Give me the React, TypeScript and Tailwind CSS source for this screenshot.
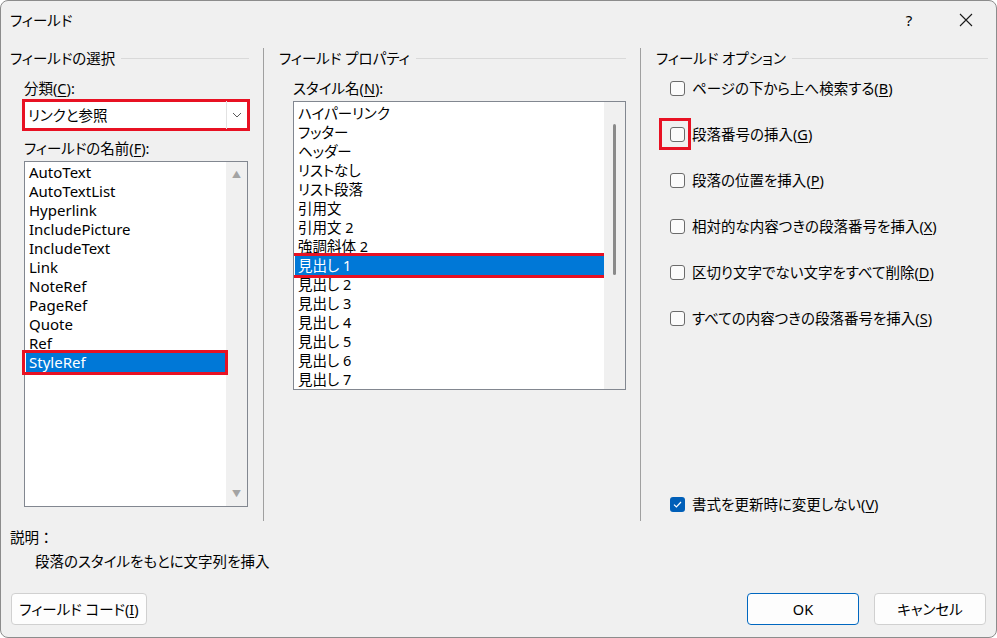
import type { ReactNode } from 'react'

const FIELD_NAMES = [
  'AutoText',
  'AutoTextList',
  'Hyperlink',
  'IncludePicture',
  'IncludeText',
  'Link',
  'NoteRef',
  'PageRef',
  'Quote',
  'Ref',
  'StyleRef',
]

const STYLE_NAMES = [
  'ハイパーリンク',
  'フッター',
  'ヘッダー',
  'リストなし',
  'リスト段落',
  '引用文',
  '引用文 2',
  '強調斜体 2',
  '見出し 1',
  '見出し 2',
  '見出し 3',
  '見出し 4',
  '見出し 5',
  '見出し 6',
  '見出し 7',
]

const OPTIONS: { label: string; key: string }[] = [
  { label: 'ページの下から上へ検索する', key: 'B' },
  { label: '段落番号の挿入', key: 'G' },
  { label: '段落の位置を挿入', key: 'P' },
  { label: '相対的な内容つきの段落番号を挿入', key: 'X' },
  { label: '区切り文字でない文字をすべて削除', key: 'D' },
  { label: 'すべての内容つきの段落番号を挿入', key: 'S' },
]

function Acc({ children }: { children: ReactNode }) {
  return <u className="underline underline-offset-2">{children}</u>
}

function GroupHeader({ title }: { title: string }) {
  return (
    <div className="flex h-[20px] items-center gap-[6px]">
      <span className="whitespace-nowrap">{title}</span>
      <div className="h-px flex-1 bg-[#d9d9d9]" />
    </div>
  )
}

function Checkbox({ checked = false }: { checked?: boolean }) {
  if (checked) {
    return (
      <span className="flex h-[15px] w-[15px] shrink-0 items-center justify-center rounded-[3px] bg-[#005fb8]">
        <svg width="9" height="7" viewBox="0 0 9 7" fill="none">
          <path d="M1 3.6 L3.4 6 L8 1" stroke="white" strokeWidth="1.2" />
        </svg>
      </span>
    )
  }
  return (
    <span className="h-[15px] w-[15px] shrink-0 rounded-[3px] border border-[#6b6b6b] bg-[#fbfbfb]" />
  )
}

function Button({ children, primary = false, className = '' }: { children: ReactNode; primary?: boolean; className?: string }) {
  return (
    <button
      className={`flex h-[32px] items-center justify-center rounded-[4px] border bg-[#fdfdfd] ${
        primary ? 'border-[#0067c0]' : 'border-[#d0d0d0]'
      } ${className}`}
    >
      {children}
    </button>
  )
}

function ListRow({ text, selected = false, ring = '' }: { text: string; selected?: boolean; ring?: string }) {
  if (!selected) {
    return <div className="h-[19px] overflow-hidden pl-[3px] leading-[19px]">{text}</div>
  }
  return (
    <div className="relative h-[19px] bg-[#0078d7] pl-[3px] leading-[19px] text-white">
      {text}
      <div className={`absolute -bottom-[3px] -top-[3px] border-[3px] border-[#e81123] ${ring}`} />
    </div>
  )
}

export default function App() {
  return (
    <div className="h-[638px] w-[997px] overflow-hidden bg-white font-['Noto_Sans','Noto_Sans_CJK_JP',sans-serif] text-[14.5px] leading-[20px] text-black [font-feature-settings:'palt']">
      <div className="relative flex h-[638px] w-[997px] flex-col rounded-[8px] border border-[#8c8c8c] bg-[#f0f0f0]">
        {/* title bar */}
        <div className="flex h-[37px] shrink-0 items-center pl-[9px]">
          <span className="flex-1">フィールド</span>
          <span className="w-[20px] text-center text-[15px]">?</span>
          <span className="ml-[36px] mr-[19px] flex w-[22px] items-center justify-center">
            <svg width="14" height="14" viewBox="0 0 14 14">
              <path d="M1 1 L13 13 M13 1 L1 13" stroke="#1a1a1a" strokeWidth="1.1" />
            </svg>
          </span>
        </div>

        {/* body */}
        <div className="mt-[10px] flex pl-[9px]">
          {/* col 1 */}
          <div className="flex w-[239px] flex-col">
            <GroupHeader title="フィールドの選択" />
            <div className="mt-[10px] pl-[14px]">
              分類(<Acc>C</Acc>):
            </div>
            <div className="ml-[12px] mt-[1px] flex h-[32px] w-[228px] border-[3px] border-[#e81123] bg-white">
              <div className="flex flex-1 items-center pl-[3px]">リンクと参照</div>
              <div className="my-[-1px] w-px bg-[#e2e2e2]" />
              <div className="flex w-[20px] items-center justify-center">
                <svg width="10" height="6" viewBox="0 0 10 6" fill="none">
                  <path d="M1 1 L5 5 L9 1" stroke="#5a5a5a" strokeWidth="1" />
                </svg>
              </div>
            </div>
            <div className="mt-[7px] pl-[14px]">
              フィールドの名前(<Acc>F</Acc>):
            </div>
            <div className="ml-[14px] mt-[3px] flex h-[346px] w-[224px] border border-[#828790] bg-white">
              <div className="flex-1 pl-[1px] pt-[1px] text-[15px]">
                {FIELD_NAMES.map((n) => (
                  <ListRow key={n} text={n} selected={n === 'StyleRef'} ring="-left-[4px] -right-[2px]" />
                ))}
              </div>
              <div className="flex w-[21px] flex-col items-center justify-between bg-[#f0f0f0] py-[8px] text-[9px] leading-[9px] text-[#a3a3a3]">
                <span>▲</span>
                <span>▼</span>
              </div>
            </div>
          </div>

          {/* separator */}
          <div className="ml-[14px] h-[473px] w-px bg-[#a0a0a0]" />

          {/* col 2 */}
          <div className="ml-[15px] flex w-[347px] flex-col">
            <GroupHeader title="フィールド プロパティ" />
            <div className="mt-[10px] pl-[14px]">
              スタイル名(<Acc>N</Acc>):
            </div>
            <div className="ml-[14px] mt-[3px] flex h-[289px] w-[333px] border border-[#828790] bg-white">
              <div className="flex-1 overflow-hidden pl-[1px] pt-[2px]">
                {STYLE_NAMES.map((n) => (
                  <ListRow key={n} text={n} selected={n === '見出し 1'} ring="-left-[4px] -right-[3px]" />
                ))}
              </div>
              <div className="flex w-[21px] justify-center bg-[#f0f0f0] pt-[22px]">
                <div className="h-[151px] w-[3px] rounded-full bg-[#8a8a8a]" />
              </div>
            </div>
          </div>

          {/* separator */}
          <div className="ml-[14px] h-[473px] w-px bg-[#a0a0a0]" />

          {/* col 3 */}
          <div className="ml-[15px] flex w-[332px] flex-col">
            <GroupHeader title="フィールド オプション" />
            <div className="mt-[10px] flex flex-col gap-[26px] pl-[14px]">
              {OPTIONS.map((o, i) => (
                <div key={o.key} className="relative flex h-[20px] items-center gap-[7px]">
                  <Checkbox />
                  <span>
                    {o.label}(<Acc>{o.key}</Acc>)
                  </span>
                  {i === 1 && (
                    <div className="absolute -left-[11px] top-[-6px] h-[32px] w-[32px] border-[3px] border-[#e81123]" />
                  )}
                </div>
              ))}
            </div>
            <div className="mt-[166px] flex h-[20px] items-center gap-[7px] pl-[14px]">
              <Checkbox checked />
              <span>
                書式を更新時に変更しない(<Acc>V</Acc>)
              </span>
            </div>
          </div>
        </div>

        {/* description */}
        <div className="mt-[6px] pl-[9px] [font-feature-settings:normal]">説明：</div>
        <div className="mt-[4px] pl-[34px]">段落のスタイルをもとに文字列を挿入</div>

        {/* buttons */}
        <div className="mt-[22px] flex px-[10px]">
          <Button className="w-[136px]">
            フィールド コード(<Acc>I</Acc>)
          </Button>
          <div className="flex-1" />
          <Button primary className="w-[112px]">
            OK
          </Button>
          <Button className="ml-[15px] w-[112px]">キャンセル</Button>
        </div>
      </div>
    </div>
  )
}
